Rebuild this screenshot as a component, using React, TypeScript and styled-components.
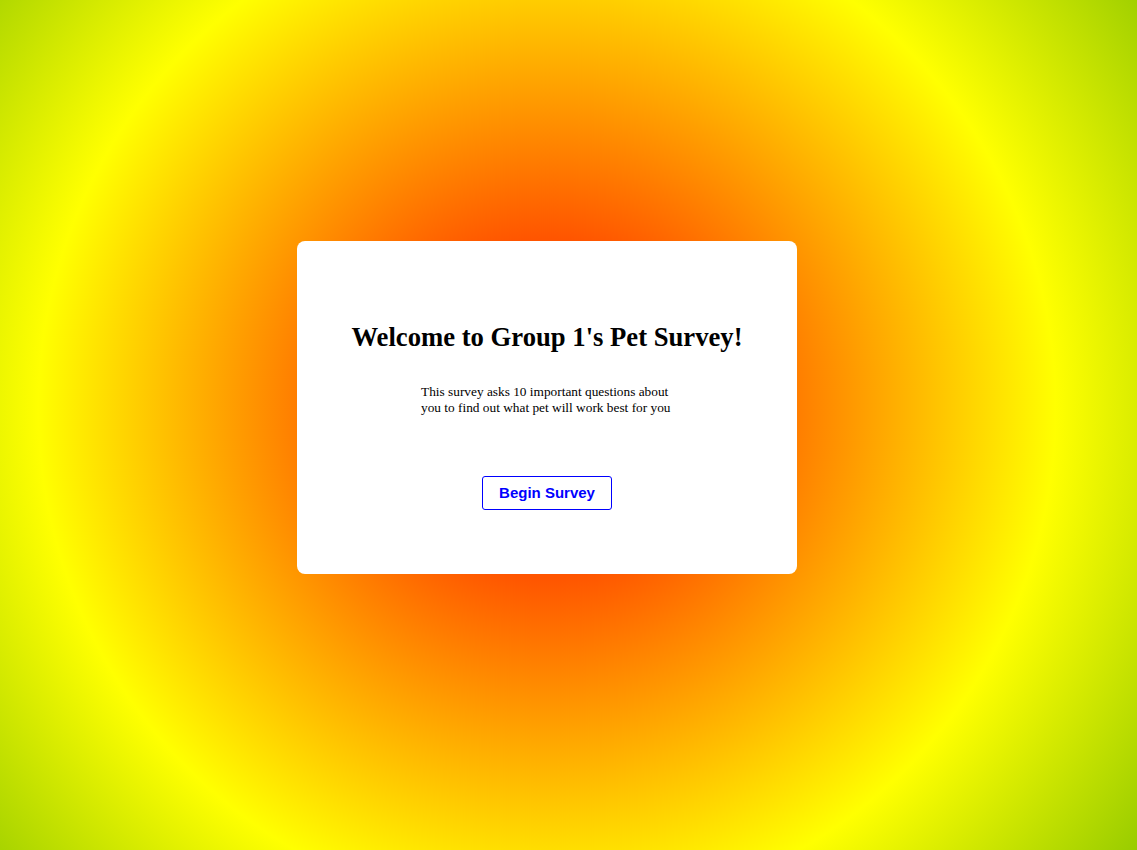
import React from "react";
import styled, { createGlobalStyle } from "styled-components";

const GlobalStyle = createGlobalStyle`
  html {
    min-height: 100%;
    background: radial-gradient(
      circle farthest-corner at 547px 408px,
      #ff5500 23%,
      #ffff00 69%,
      #99cc00 100%
    );
    background-attachment: fixed;
  }
  body {
    margin: 0;
    min-height: 100vh;
    font-family: "Liberation Serif", "Times New Roman", serif;
  }
`;

const Page = styled.main`
  width: 1094px;
  height: 815px;
  display: flex;
  align-items: center;
  justify-content: center;
`;

const Card = styled.section`
  box-sizing: border-box;
  width: 500px;
  height: 333px;
  background: #ffffff;
  border-radius: 8px;
  display: flex;
  flex-direction: column;
  align-items: center;
  padding-top: 80px;
`;

const Title = styled.h1`
  margin: 0;
  font-family: "Liberation Serif", "Times New Roman", serif;
  font-weight: 700;
  font-size: 26.67px;
  line-height: 32px;
  color: #000;
`;

const Intro = styled.p`
  margin: 31px 0 0;
  width: 252px;
  font-size: 13.33px;
  line-height: 16px;
  text-align: left;
  color: #000;
`;

const BeginButton = styled.button`
  margin-top: 60px;
  box-sizing: border-box;
  height: 34px;
  padding: 0 16px;
  background: #ffffff;
  border: 1px solid #0000ff;
  border-radius: 3px;
  color: #0000ff;
  font-family: "Liberation Sans", Arial, sans-serif;
  font-weight: 700;
  font-size: 15px;
  line-height: 18px;
  cursor: pointer;
`;

export default function App() {
  return (
    <>
      <GlobalStyle />
      <Page>
        <Card>
          <Title>Welcome to Group 1's Pet Survey!</Title>
          <Intro>
            This survey asks 10 important questions about you to find out what
            pet will work best for you
          </Intro>
          <BeginButton type="button">Begin Survey</BeginButton>
        </Card>
      </Page>
    </>
  );
}
